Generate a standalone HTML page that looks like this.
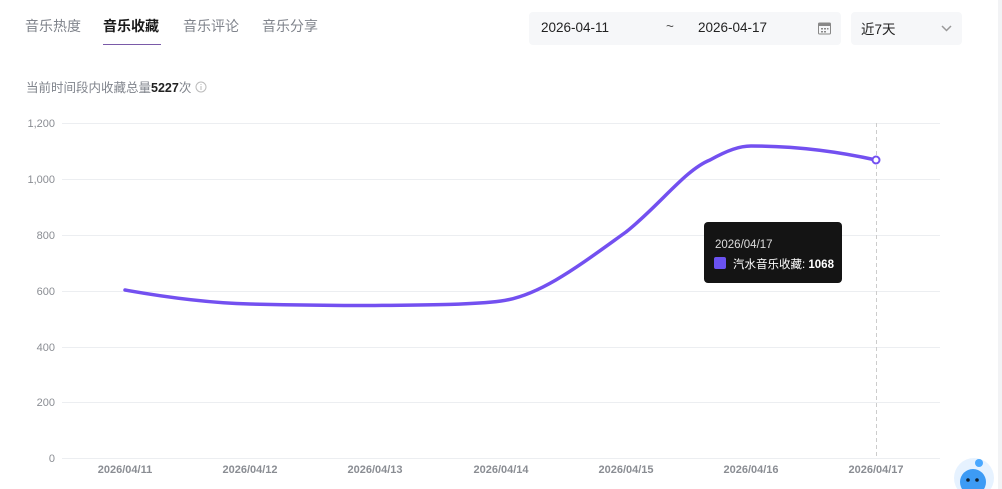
<!DOCTYPE html>
<html><head><meta charset="utf-8"><style>
*{margin:0;padding:0;box-sizing:border-box}
body{width:1002px;height:489px;overflow:hidden;background:#fff;font-family:"Liberation Sans","Noto Sans CJK SC",sans-serif;position:relative}
.tab{position:absolute;top:16px;font-size:14px;color:#80848c}
.act{color:#1a1a1a;font-weight:bold}
.ul{position:absolute;left:103px;top:44px;width:58px;height:1px;background:#7a5aa8}
.box{position:absolute;top:12px;height:33px;background:#f6f7f9;border-radius:4px;font-size:13.5px;color:#222}
.sum{position:absolute;left:26px;top:77px;font-size:12.5px;color:#80848c}
.sum b{color:#222}
.tip{position:absolute;left:704px;top:222px;width:138px;height:61px;background:#141414;border-radius:4px;color:#ddd;font-size:11.5px}
.strip{position:absolute;right:0;top:0;width:4px;height:489px;background:#f2f3f5}
</style></head><body>
<div class="tab" style="left:25px">音乐热度</div>
<div class="tab act" style="left:103px">音乐收藏</div>
<div class="tab" style="left:183px">音乐评论</div>
<div class="tab" style="left:262px">音乐分享</div>
<div class="ul"></div>
<div class="box" style="left:529px;width:312px">
<span style="position:absolute;left:12px;top:8px">2026-04-11</span>
<span style="position:absolute;left:137px;top:7px;color:#555">~</span>
<span style="position:absolute;left:169px;top:8px">2026-04-17</span>
<svg style="position:absolute;left:289px;top:10px" width="13" height="13" viewBox="0 0 13 13"><rect x="0.5" y="1" width="12" height="11" rx="1" fill="none" stroke="#888"/><rect x="0.5" y="1" width="12" height="3" fill="#888"/><g fill="#888"><rect x="3" y="6" width="2" height="1.5"/><rect x="6" y="6" width="2" height="1.5"/><rect x="9" y="6" width="1.5" height="1.5"/><rect x="3" y="9" width="2" height="1.5"/><rect x="6" y="9" width="2" height="1.5"/></g></svg>
</div>
<div class="box" style="left:851px;width:111px">
<span style="position:absolute;left:10px;top:6px">近7天</span>
<svg style="position:absolute;left:90px;top:13px" width="11" height="7" viewBox="0 0 11 7"><path d="M1 1l4.5 4.5L10 1" fill="none" stroke="#999" stroke-width="1.5"/></svg>
</div>
<div class="sum">当前时间段内收藏总量<b>5227</b>次 <svg width="12" height="12" viewBox="0 0 12 12" style="vertical-align:-1px"><circle cx="6" cy="6" r="5" fill="none" stroke="#bbb"/><rect x="5.5" y="5" width="1" height="4" fill="#bbb"/><rect x="5.5" y="3" width="1" height="1" fill="#bbb"/></svg></div>
<svg style="position:absolute;left:0;top:0" width="1002" height="489">
<g stroke="#eceef1" stroke-width="1">
<line x1="62" y1="123.5" x2="940" y2="123.5"/><line x1="62" y1="179.5" x2="940" y2="179.5"/><line x1="62" y1="235.5" x2="940" y2="235.5"/><line x1="62" y1="291.5" x2="940" y2="291.5"/><line x1="62" y1="347.5" x2="940" y2="347.5"/><line x1="62" y1="402.5" x2="940" y2="402.5"/><line x1="62" y1="458.5" x2="940" y2="458.5"/>
</g>
<line x1="876.5" y1="123" x2="876.5" y2="458" stroke="#ccc" stroke-dasharray="4,3"/>
<g font-family="Liberation Sans, sans-serif" font-size="11" fill="#8a8d93" text-anchor="end">
<text x="55" y="127">1,200</text><text x="55" y="183">1,000</text><text x="55" y="239">800</text><text x="55" y="295">600</text><text x="55" y="351">400</text><text x="55" y="406">200</text><text x="55" y="462">0</text>
</g>
<g font-family="Liberation Sans, sans-serif" font-size="11" fill="#8a8d93" text-anchor="middle" font-weight="bold">
<text x="125" y="473">2026/04/11</text><text x="250" y="473">2026/04/12</text><text x="375" y="473">2026/04/13</text><text x="501" y="473">2026/04/14</text><text x="626" y="473">2026/04/15</text><text x="751" y="473">2026/04/16</text><text x="876" y="473">2026/04/17</text>
</g>
<path d="M125,290 C170,298 210,303 250,304 C290,305 340,305.5 375,305.5 C420,305 470,305 501,301 C540,296 580,265 626,232 C660,205 685,170 710,160 C728,150 740,146 751,146 C800,146 840,152 876,160" fill="none" stroke="#7350f0" stroke-width="3.5" stroke-linecap="round"/>
<circle cx="876" cy="160" r="3.5" fill="#fff" stroke="#7350f0" stroke-width="2"/>
<circle cx="974" cy="478" r="20" fill="#e6f2ff"/>
<circle cx="973" cy="482" r="13" fill="#3d9bf5"/>
<circle cx="979" cy="463" r="4" fill="#4aa8ff"/>
<circle cx="968" cy="480" r="1.8" fill="#123"/><circle cx="977" cy="480" r="1.8" fill="#123"/>
</svg>
<div class="tip">
<div style="position:absolute;left:11px;top:17px">2026/04/17</div>
<div style="position:absolute;left:10px;top:35px;width:12px;height:12px;background:#6a52f0;border-radius:2px"></div>
<div style="position:absolute;left:29px;top:34px;color:#fff">汽水音乐收藏: <b>1068</b></div>
</div>
<div class="strip"></div>
</body></html>
